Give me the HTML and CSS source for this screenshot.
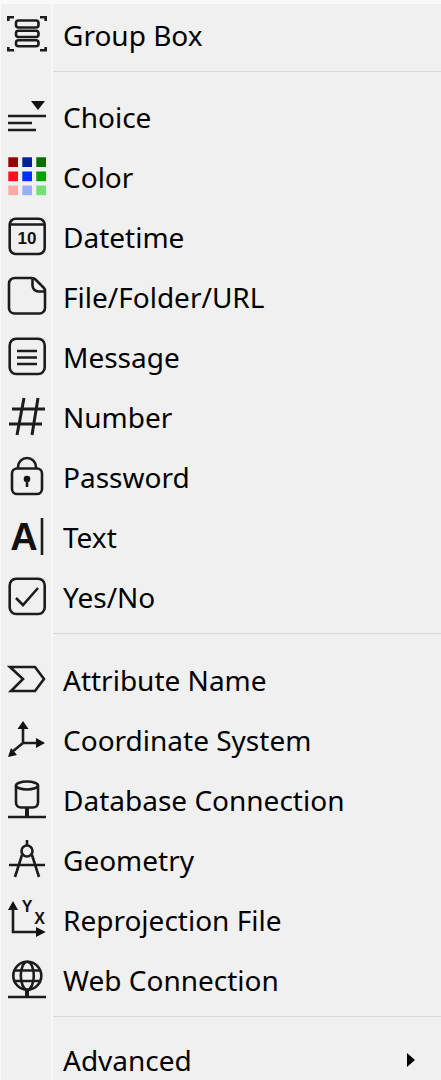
FILE: index.html
```html
<!DOCTYPE html>
<html lang="en">
<head>
<meta charset="utf-8">
<title>Menu</title>
<link rel="stylesheet" href="styles.css">
</head>
<body>
<div class="menu">
  <div class="item first"><svg class="ico" viewBox="0 0 40 40"><path d="M1.300 7V3.200H7M33 3.200h5.700V7M1.300 33v3.200H7M33 36.200h5.700V33" class="ln"/><rect x="9" y="6.500" width="22.500" height="7" rx="2.500" class="ln"/><rect x="9" y="16.700" width="22.500" height="6.300" rx="2.500" class="ln"/><rect x="9" y="26.200" width="22.500" height="6" rx="2.500" class="ln"/></svg><span class="label">Group Box</span></div>
  <div class="sep top"></div>
  <div class="item"><svg class="ico" viewBox="0 0 40 40"><path d="M24 5h14l-7 9z" class="solid"/><path d="M1 20h38M1 27h24M1 34h28" class="ln"/></svg><span class="label">Choice</span></div>
  <div class="item"><svg class="ico" viewBox="0 0 40 40"><rect x="1.300" y="1.300" width="9.700" height="9.700" fill="#990000"/><rect x="15.300" y="1.300" width="9.700" height="9.700" fill="#00209a"/><rect x="29.300" y="1.300" width="9.700" height="9.700" fill="#007000"/><rect x="1.300" y="15.500" width="9.700" height="9.700" fill="#ff1020"/><rect x="15.300" y="15.500" width="9.700" height="9.700" fill="#0030ff"/><rect x="29.300" y="15.500" width="9.700" height="9.700" fill="#00a000"/><rect x="1.300" y="29.500" width="9.700" height="9.700" fill="#ffa8aa"/><rect x="15.300" y="29.500" width="9.700" height="9.700" fill="#9aaeff"/><rect x="29.300" y="29.500" width="9.700" height="9.700" fill="#74e074"/></svg><span class="label">Color</span></div>
  <div class="item"><svg class="ico" viewBox="0 0 40 40"><rect x="2.700" y="2.700" width="35" height="35.300" rx="6" class="ln"/><path d="M2.700 8.500h35" class="ln"/><text x="20" y="28" class="num">10</text></svg><span class="label">Datetime</span></div>
  <div class="item"><svg class="ico" viewBox="0 0 40 40"><path d="M8 2h17c1.500 0 2.500.5 3.500 1.500l8 8c1 1 1.500 2 1.500 3.500v17a5.500 5.500 0 0 1-5.500 5.500H7.500A5.500 5.500 0 0 1 2 32.500V7.500A5.500 5.500 0 0 1 8 2z" class="ln"/><path d="M25.500 2.500v7a6 6 0 0 0 6 6h6.500" class="ln"/></svg><span class="label">File/Folder/URL</span></div>
  <div class="item"><svg class="ico" viewBox="0 0 40 40"><rect x="2.700" y="2.700" width="35" height="35.300" rx="6.500" class="ln"/><path d="M10 15h20M10 21.500h20M10 28h20" class="ln"/></svg><span class="label">Message</span></div>
  <div class="item"><svg class="ico" viewBox="0 0 40 40"><path d="M17 2 10 39M31 2 25 39M5 13h33M2 28h33" class="ln thick"/></svg><span class="label">Number</span></div>
  <div class="item"><svg class="ico" viewBox="0 0 40 40"><rect x="5" y="12.500" width="30" height="25.500" rx="5" class="ln"/><path d="M11 12.500V11a9 9 0 0 1 18 0v1.500" class="ln"/><circle cx="20" cy="23" r="3.300" class="solid"/><path d="M20 24v7" class="ln"/></svg><span class="label">Password</span></div>
  <div class="item"><svg class="ico" viewBox="0 0 40 40"><text x="17" y="34" class="big-a">A</text><path d="M35 2v37" class="ln"/></svg><span class="label">Text</span></div>
  <div class="item"><svg class="ico" viewBox="0 0 40 40"><rect x="2.700" y="2.700" width="35" height="35.300" rx="6.500" class="ln"/><path d="M9 22l7 7 15-17" class="ln"/></svg><span class="label">Yes/No</span></div>
  <div class="sep mid"></div>
  <div class="item"><svg class="ico" viewBox="0 0 40 40"><path d="M3 8h25l9 12-9 12H4l12-12z" class="ln"/></svg><span class="label">Attribute Name</span></div>
  <div class="item"><svg class="ico" viewBox="0 0 40 40"><path d="M16 2l-5.500 8h11zM38 24l-9-5v10zM1 38l3-9 6 7z" class="solid"/><path d="M16 10v14h13M16 24 5 33" class="ln"/></svg><span class="label">Coordinate System</span></div>
  <div class="item"><svg class="ico" viewBox="0 0 40 40"><ellipse cx="20" cy="6.500" rx="11" ry="4" class="ln"/><path d="M9 6.500v17c0 3 2 5 5 5h12c3 0 5-2 5-5v-17" class="ln"/><path d="M20 29v8" class="ln stem"/><path d="M1 38h38" class="ln"/></svg><span class="label">Database Connection</span></div>
  <div class="item"><svg class="ico" viewBox="0 0 40 40"><path d="M20 1v5" class="ln"/><circle cx="20" cy="12" r="5.500" class="ln"/><path d="M15 16 8 38M25 16l7 22M2 26h36" class="ln"/></svg><span class="label">Geometry</span></div>
  <div class="item"><svg class="ico" viewBox="0 0 40 40"><path d="M6 2 1 11h10zM38.700 33 29 28v10z" class="solid"/><path d="M6 10v23h24" class="ln"/><text x="20" y="12.500" class="axis">Y</text><text x="32.500" y="24.500" class="axis">X</text></svg><span class="label">Reprojection File</span></div>
  <div class="item"><svg class="ico" viewBox="0 0 40 40"><circle cx="20.300" cy="16.700" r="14" class="ln"/><ellipse cx="20.300" cy="16.700" rx="6.500" ry="14" class="ln"/><path d="M7 11.500h27M7 22h27" class="ln"/><path d="M20 30v7" class="ln stem"/><path d="M1 38h38" class="ln"/></svg><span class="label">Web Connection</span></div>
  <div class="sep low"></div>
  <div class="item"><span class="gap"></span><span class="label">Advanced</span><i class="arrow"></i></div>
</div>
</body>
</html>
```
FILE: styles.css
```css
html, body {
  margin: 0;
  padding: 0;
  background: #f0f0f0;
}
body {
  width: 441px;
  height: 1080px;
  overflow: hidden;
}
.menu {
  height: 1080px;
  box-sizing: border-box;
  border-top: 4px solid #f9f9f9;
  border-left: 1px solid #fafafa;
  background: linear-gradient(to right, #f0f0f0 0, #f0f0f0 50px, #f7f7f7 50px, #f7f7f7 52px, #f0f0f0 52px);
  color: #000;
}
.item {
  height: 60px;
  display: flex;
  align-items: center;
  font-family: "Noto Sans", "Open Sans", sans-serif;
  font-size: 28px;
  line-height: 56px;
}
.label {
  margin-bottom: 2px;
}
.first {
  height: 64px;
}
.ico {
  width: 40px;
  height: 40px;
  margin: 0 16px 4px 6px;
  flex: none;
  overflow: visible;
}
.gap {
  width: 62px;
  flex: none;
}
.ln {
  fill: none;
  stroke: #1c1c1c;
  stroke-width: 2.6;
}
.thick {
  stroke-width: 3;
}
.stem {
  stroke-width: 4;
}
.solid {
  fill: #111;
}
.sep {
  height: 1px;
  margin: 5px 0 16px 52px;
  background: #d8d8d8;
}
.sep.top {
  margin-top: 3px;
}
.sep.mid {
  margin-bottom: 17px;
}
.sep.low {
  margin-bottom: 14px;
}
.num {
  font: bold 17px "Liberation Sans", sans-serif;
  text-anchor: middle;
  fill: #111;
}
.big-a {
  font: bold 38px "Liberation Sans", sans-serif;
  text-anchor: middle;
  fill: #111;
}
.axis {
  font: bold 16px "Liberation Sans", sans-serif;
  text-anchor: middle;
  fill: #111;
}
.arrow {
  width: 0;
  height: 0;
  margin: 0 26px 3px auto;
  border-left: 8px solid #000;
  border-top: 7px solid transparent;
  border-bottom: 7px solid transparent;
}
```
